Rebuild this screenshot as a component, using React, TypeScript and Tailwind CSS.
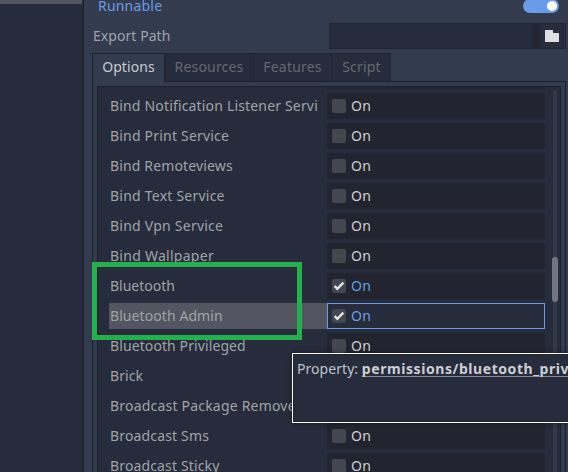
import React from "react";

type Property = { label: string; tracking?: string; checked?: boolean; selected?: boolean };

const properties: Property[] = [
  { label: "Bind Notification Listener Servi", tracking: "tracking-[0.17px]" },
  { label: "Bind Print Service" },
  { label: "Bind Remoteviews", tracking: "tracking-[0.14px]" },
  { label: "Bind Text Service", tracking: "tracking-[0.23px]" },
  { label: "Bind Vpn Service", tracking: "tracking-[0.23px]" },
  { label: "Bind Wallpaper", tracking: "tracking-[0.27px]" },
  { label: "Bluetooth", tracking: "tracking-[0px]", checked: true },
  { label: "Bluetooth Admin", tracking: "tracking-[0.08px]", checked: true, selected: true },
  { label: "Bluetooth Privileged", tracking: "tracking-[0.1px]" },
  { label: "Brick", tracking: "tracking-[0.1px]" },
  { label: "Broadcast Package Removed" },
  { label: "Broadcast Sms", tracking: "tracking-[0.16px]" },
  { label: "Broadcast Sticky", tracking: "tracking-[0.14px]" },
];

function CheckBox({ checked }: { checked?: boolean }) {
  return (
    <span className="flex size-3.5 shrink-0 items-center justify-center rounded-[2px] bg-[#444750]">
      {checked && (
        <svg viewBox="0 0 14 14" className="size-3.5" fill="none" stroke="#e4e4e4" strokeWidth="2.4">
          <path d="M2.6 7 5.3 9.8 11.4 3.6" />
        </svg>
      )}
    </span>
  );
}

function PropertyRow({ label, tracking = "", checked, selected }: Property) {
  return (
    <div className="flex h-[26px] shrink-0">
      <div
        className={`w-[218px] overflow-hidden pl-px leading-[25px] text-[#a0a3a6] ${tracking} ${selected ? "bg-[#535661]" : ""}`}
      >
        {label}
      </div>
      <div
        className={`flex w-[218px] items-center gap-[5px] ${
          selected ? "border border-[#699ce8] bg-[#262c3b] pl-1" : "bg-[#22252f] pl-[5px]"
        }`}
      >
        <CheckBox checked={checked} />
        <span className={`leading-[25px] -mt-px ${checked ? "text-[#699ce8]" : "text-[#cdcfd2]"}`}>On</span>
      </div>
    </div>
  );
}

function Tab({ label, width }: { label: string; width: string }) {
  return (
    <div className={`${width} h-7 border-t border-r border-[#202531] bg-[#262c3b] text-center leading-[26px] text-[#65686f]`}>
      {label}
    </div>
  );
}

export default function App() {
  return (
    <div className="relative flex h-[472px] w-[568px] overflow-hidden bg-[#333b4f] font-['Noto_Sans',sans-serif] text-[14px] tracking-[0.2px] whitespace-nowrap">
      <aside className="w-[84px] shrink-0 border-r border-[#1b202b] bg-[#262c3b]">
        <div className="h-1 w-[82px] bg-[#535661]" />
      </aside>

      <main className="flex w-[484px] flex-col pl-2">
        <div className="flex h-[23px] shrink-0 justify-between pr-[9px] pl-1.5">
          <span className="-mt-1.5 h-6 leading-6 text-[#699ce8]">Runnable</span>
          <span className="-mt-px flex h-3.5 w-9 items-center justify-end rounded-full bg-[#699ce8] pr-0.5">
            <span className="size-2.5 rounded-full bg-white" />
          </span>
        </div>

        <div className="flex h-[26px] shrink-0">
          <span className="w-[237px] pl-px leading-[25px] tracking-[0.06px] text-[#9fa3aa]">Export Path</span>
          <div className="flex w-[237px] border border-[#202531] bg-[#22252f]">
            <div className="w-[203px] bg-[#262c3b]" />
            <div className="ml-1.5 flex w-[26px] items-center justify-center bg-[#262c3b]">
              <svg viewBox="0 0 14 12" className="h-3 w-3.5" fill="#e0e0e0">
                <path d="M.5 0H7.5L8 .5V2.5L8.5 3H13.5L14 3.5V11.5L13.5 12H.5L0 11.5V.5Z" />
              </svg>
            </div>
          </div>
        </div>

        <div className="relative z-10 mt-1 flex h-7 shrink-0">
          <div className="h-[29px] w-[73px] border border-b-0 border-[#1b202b] bg-[#333b4f] text-center leading-[26px] tracking-[0.1px] text-[#c6c9ce]">
            Options
          </div>
          <Tab label="Resources" width="w-[89px]" />
          <Tab label="Features" width="w-[78px]" />
          <Tab label="Script" width="w-[59px] pl-px" />
        </div>

        <div className="flex h-[400px] w-[474px] shrink-0 border border-[#1b202b] px-1 pt-1">
          <div className="flex h-[400px] w-[464px] border border-[#1b202b] bg-[#262c3b] pl-[11px]">
            <div className="flex w-[436px] flex-col gap-1">
              <div className="ml-[218px] h-0.5 shrink-0 bg-[#22252f]" />
              {properties.map((property) => (
                <PropertyRow key={property.label} {...property} />
              ))}
            </div>
            <div className="mt-[3px] ml-[7px] flex w-1.5 flex-col items-center">
              <div className="h-[167px] w-1 shrink-0 rounded-t-full bg-[#343947]" />
              <div className="h-[45px] w-1.5 shrink-0 rounded-full bg-[#72757f]" />
              <div className="w-1 grow bg-[#343947]" />
            </div>
          </div>
        </div>
      </main>

      <div className="absolute top-[262px] left-[92px] z-20 h-[78px] w-[210px] border-5 border-[#24b04c]" />

      <div className="absolute top-[353px] left-[292px] z-30 h-[70px] w-[300px] border border-white bg-[#262c3b] pt-[2px] pl-1 leading-[25px] tracking-[0.05px] text-[#bfc2c7] shadow-[0_0_4px_rgba(0,0,0,0.5),inset_0_0_2px_rgba(0,0,0,0.5)]">
        Property: <span className="font-bold tracking-[0.57px] text-[#cdcfd2] underline decoration-[#888b93] decoration-1 underline-offset-2 [text-decoration-skip-ink:none]">permissions/bluetooth_privileged</span>
      </div>
    </div>
  );
}
